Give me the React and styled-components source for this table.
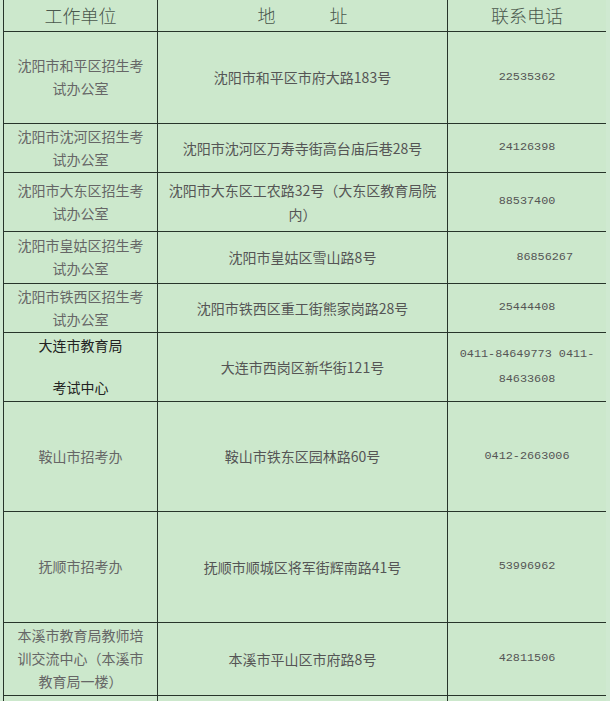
import React from 'react';
import styled, { createGlobalStyle } from 'styled-components';

const GlobalStyle = createGlobalStyle`
    body {
        margin: 0;
        background: #cfe9d1;
        font-family: "Noto Sans CJK SC", "Liberation Sans", sans-serif;
    }
`;

const Page = styled.div`
    padding-left: 3px;
    width: 603px;
    overflow: hidden;
    height: 701px;
`;

const Table = styled.table`
    border-collapse: collapse;
    width: 603px;
    table-layout: fixed;
    background: #cce8cc;
`;

const Row = styled.tr`
    height: ${p => p.h}px;
`;

const HeadCell = styled.th`
    border: 1px solid #27352a;
    border-top: none;
    font-weight: 300;
    font-size: 18px;
    color: #4a574d;
    text-align: center;
    padding: 0;
    line-height: 28px;
`;

const UnitCell = styled.td`
    border: 1px solid #27352a;
    font-size: 14px;
    line-height: ${p => p.dark ? 21 : 23}px;
    color: ${p => p.dark ? '#222' : '#666'};
    text-align: center;
    padding: 0 8px;
`;

const AddrCell = styled.td`
    border: 1px solid #27352a;
    font-size: 14px;
    line-height: 24px;
    color: #555;
    text-align: center;
    padding: 0 6px;
`;

const PhoneCell = styled.td`
    border: 1px solid #27352a;
    font-family: "Liberation Mono", monospace;
    font-size: 11.8px;
    line-height: 25px;
    color: #555;
    text-align: center;
    padding: 0 4px;
    white-space: pre;
`;

const rows = [
    { h: 92, unit: '沈阳市和平区招生考试办公室', addr: '沈阳市和平区市府大路183号', phone: '22535362' },
    { h: 49, unit: '沈阳市沈河区招生考试办公室', addr: '沈阳市沈河区万寿寺街高台庙后巷28号', phone: '24126398' },
    { h: 59, unit: '沈阳市大东区招生考试办公室', addr: '沈阳市大东区工农路32号（大东区教育局院内）', phone: '88537400' },
    { h: 52, unit: '沈阳市皇姑区招生考试办公室', addr: '沈阳市皇姑区雪山路8号', phone: '     86856267' },
    { h: 49, unit: '沈阳市铁西区招生考试办公室', addr: '沈阳市铁西区重工街熊家岗路28号', phone: '25444408' },
    { h: 69, unit: ['大连市教育局', '', '考试中心'], dark: true, addr: '大连市西岗区新华街121号', phone: '0411-84649773 0411-\n84633608' },
    { h: 110, unit: '鞍山市招考办', addr: '鞍山市铁东区园林路60号', phone: '0412-2663006' },
    { h: 111, unit: '抚顺市招考办', addr: '抚顺市顺城区将军街辉南路41号', phone: '53996962' },
    { h: 73, unit: '本溪市教育局教师培训交流中心（本溪市教育局一楼）', addr: '本溪市平山区市府路8号', phone: '42811506' },
    { h: 60, unit: '', addr: '', phone: '' },
];

const App = () => {
    return (
        <Page>
            <GlobalStyle />
            <Table>
                <colgroup>
                    <col style={{ width: 154 }} />
                    <col style={{ width: 290 }} />
                    <col style={{ width: 159 }} />
                </colgroup>
                <thead>
                    <Row h={31}>
                        <HeadCell>工作单位</HeadCell>
                        <HeadCell>地&#12288;&#12288;&#12288;址</HeadCell>
                        <HeadCell>联系电话</HeadCell>
                    </Row>
                </thead>
                <tbody>
                    {rows.map((r, i) => (
                        <Row h={r.h} key={i}>
                            <UnitCell dark={r.dark}>
                                {Array.isArray(r.unit)
                                    ? r.unit.map((line, j) => <div key={j}>{line || '\u00a0'}</div>)
                                    : r.unit}
                            </UnitCell>
                            <AddrCell>{r.addr}</AddrCell>
                            <PhoneCell>{r.phone}</PhoneCell>
                        </Row>
                    ))}
                </tbody>
            </Table>
        </Page>
    );
};

export default App;
